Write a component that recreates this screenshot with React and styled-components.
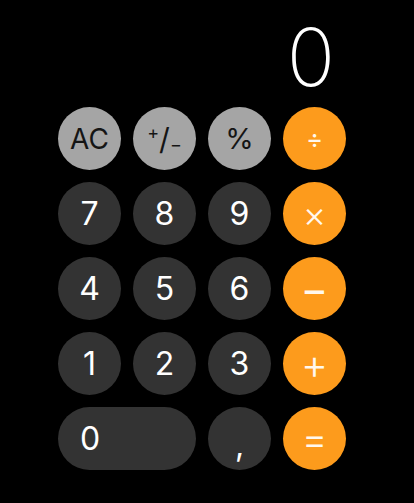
import React from "react";
import styled, { createGlobalStyle } from "styled-components";

const Global = createGlobalStyle`
  html, body { margin: 0; padding: 0; background: #000; }
  body { font-family: Inter, "Liberation Sans", sans-serif; }
`;

const Screen = styled.div`
  width: 414px;
  height: 503px;
  background: #000;
  display: flex;
  flex-direction: column;
  padding-left: 58px;
  box-sizing: border-box;
`;

const Display = styled.div`
  width: 288px;
  height: 107px;
  box-sizing: border-box;
  display: flex;
  align-items: flex-end;
  justify-content: flex-end;
  padding: 0 11px 10px 0;
  color: #fff;
  font-size: 80px;
  font-weight: 200;
  line-height: 1;
`;

const Keypad = styled.div`
  display: grid;
  grid-template-columns: repeat(4, 63px);
  grid-auto-rows: 63px;
  gap: 12px;
`;

const palette = {
  func: { bg: "#a5a5a5", fg: "#151515" },
  digit: { bg: "#333333", fg: "#ffffff" },
  op: { bg: "#fd9b1c", fg: "#fff8ee" },
};

const Key = styled.button`
  border: none;
  margin: 0;
  padding: 0;
  border-radius: 32px;
  background: ${(p) => palette[p.$kind].bg};
  color: ${(p) => palette[p.$kind].fg};
  font-family: Inter, "Liberation Sans", sans-serif;
  font-size: ${(p) => p.$size || 32}px;
  font-weight: ${(p) => p.$weight || 400};
  line-height: 1;
  display: flex;
  align-items: center;
  justify-content: ${(p) => (p.$wide ? "flex-start" : "center")};
  padding-left: ${(p) => (p.$wide ? "22px" : "0")};
  grid-column: ${(p) => (p.$wide ? "span 2" : "auto")};
`;

const Sup = styled.span`
  font-size: 18px;
  position: relative;
  top: -6px;
`;
const Slash = styled.span`
  font-size: 30px;
`;
const Sub = styled.span`
  font-size: 18px;
  position: relative;
  top: 6px;
`;

const Comma = styled.span`
  position: relative;
  top: 6px;
`;

export default function App() {
  return (
    <>
      <Global />
      <Screen>
        <Display>0</Display>
        <Keypad>
          <Key $kind="func" $size={28}>AC</Key>
          <Key $kind="func">
            <Sup>+</Sup>
            <Slash>/</Slash>
            <Sub>−</Sub>
          </Key>
          <Key $kind="func" $size={29}>%</Key>
          <Key $kind="op" $size={26}>÷</Key>

          <Key $kind="digit">7</Key>
          <Key $kind="digit">8</Key>
          <Key $kind="digit">9</Key>
          <Key $kind="op" $size={36} $weight={300}>×</Key>

          <Key $kind="digit">4</Key>
          <Key $kind="digit">5</Key>
          <Key $kind="digit">6</Key>
          <Key $kind="op" $size={42} $weight={400}>−</Key>

          <Key $kind="digit">1</Key>
          <Key $kind="digit">2</Key>
          <Key $kind="digit">3</Key>
          <Key $kind="op" $size={42} $weight={300}>+</Key>

          <Key $kind="digit" $wide>0</Key>
          <Key $kind="digit"><Comma>,</Comma></Key>
          <Key $kind="op" $size={40} $weight={300}>=</Key>
        </Keypad>
      </Screen>
    </>
  );
}
